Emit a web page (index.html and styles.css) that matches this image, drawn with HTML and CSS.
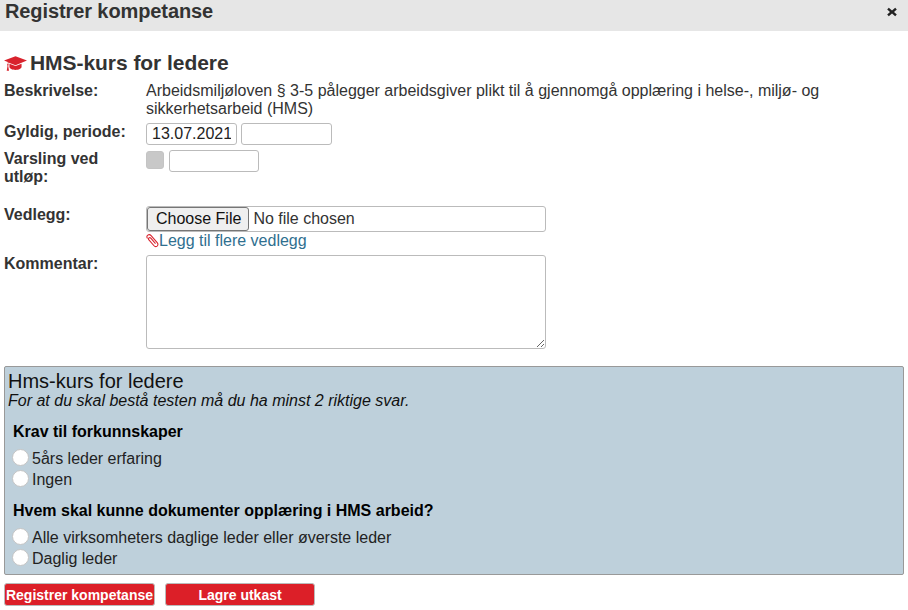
FILE: index.html
```html
<!DOCTYPE html>
<html lang="en">
<head>
    <meta charset="UTF-8">
    <title>Registrer kompetanse</title>
    <link rel="stylesheet" href="styles.css">
</head>
<body>
    <div class="dialog-header">
        <span class="dialog-title">Registrer kompetanse</span>
        <svg class="close-icon" viewBox="0 0 10 10" width="10" height="10"><path d="M1.800 .8 5 3.600 8.200 .8 9.800 2.400 7 5 9.800 7.600 8.200 9.200 5 6.400 1.800 9.200 .2 7.600 3 5 .2 2.400z"/></svg>
    </div>
    <div class="dialog-body">
        <h2 class="course-title">
            <svg class="cap-icon" viewBox="0 1 22 14" width="23" height="15"><path d="M11 1 0 5.200 3.600 6.600V8.200C3.200 8.400 3 8.800 3 9.200 3 9.600 3.200 9.900 3.400 10.100L2.600 15H4.800L4 10.100C4.300 9.900 4.400 9.600 4.400 9.200 4.400 8.800 4.300 8.500 4.100 8.300V7L11 9.600 22 5.200ZM5.200 8.200V11.400C5.200 12.900 8 14.200 11 14.200 14 14.200 16.800 12.900 16.800 11.400V8.200L11 10.500Z"/></svg>
            HMS-kurs for ledere
        </h2>
        <div class="form-row row-desc">
            <label>Beskrivelse:</label>
            <div class="desc">Arbeidsmiljøloven § 3-5 pålegger arbeidsgiver plikt til å gjennomgå opplæring i helse-, miljø- og sikkerhetsarbeid (HMS)</div>
        </div>
        <div class="form-row row-period">
            <label>Gyldig, periode:</label>
            <div class="inline">
                <input class="text-input date" type="text" value="13.07.2021">
                <input class="text-input date" type="text">
            </div>
        </div>
        <div class="form-row row-notify">
            <label>Varsling ved<br>utløp:</label>
            <div class="inline">
                <span class="check"></span>
                <input class="text-input notify" type="text">
            </div>
        </div>
        <div class="form-row row-attach">
            <label>Vedlegg:</label>
            <div>
                <div class="file-box"><span class="file-btn">Choose File</span><span class="file-name">No file chosen</span></div>
                <a class="add-link" href="#">
                    <svg class="clip-icon" viewBox="0 0 13 14" width="13" height="14"><path d="M1.500 4.500C.5 3.200 .8 1.800 1.800 1.100 2.900 .3 4.200 .6 5.100 1.600L11.200 8.600C12.300 9.900 12.100 11.300 11.100 12.100 10 12.900 8.700 12.600 7.800 11.500L2.900 5.900C2.300 5.200 2.400 4.400 3 3.900 3.600 3.500 4.300 3.600 4.800 4.200L9.500 9.600" fill="none" stroke-width="1.100"/></svg>Legg til flere vedlegg
                </a>
            </div>
        </div>
        <div class="form-row">
            <label>Kommentar:</label>
            <textarea class="comment"></textarea>
        </div>
        <div class="quiz">
            <div class="quiz-title">Hms-kurs for ledere</div>
            <div class="quiz-note">For at du skal bestå testen må du ha minst 2 riktige svar.</div>
            <div class="question">Krav til forkunnskaper</div>
            <div class="answer"><span class="radio"></span>5års leder erfaring</div>
            <div class="answer"><span class="radio"></span>Ingen</div>
            <div class="question second">Hvem skal kunne dokumenter opplæring i HMS arbeid?</div>
            <div class="answer"><span class="radio"></span>Alle virksomheters daglige leder eller øverste leder</div>
            <div class="answer"><span class="radio"></span>Daglig leder</div>
        </div>
        <div class="buttons">
            <button class="red-btn">Registrer kompetanse</button>
            <button class="red-btn draft">Lagre utkast</button>
        </div>
    </div>
</body>
</html>
```

FILE: styles.css
```css
html, body {
    margin: 0;
    padding: 0;
}
body {
    font-family: "Liberation Sans", Arial, sans-serif;
    font-size: 16px;
    color: #333;
    background: #fff;
    overflow: hidden;
}
.dialog-header {
    height: 31px;
    background: #e6e6e6;
    padding: 0 11px 0 5px;
    display: flex;
    justify-content: space-between;
    align-items: flex-start;
}
.dialog-title {
    font-size: 20px;
    font-weight: bold;
    line-height: 23px;
    letter-spacing: -.1px;
}
.close-icon {
    margin-top: 7px;
    fill: #222;
}
.dialog-body {
    padding: 20px 4px 0 4px;
}
.course-title {
    margin: 0 0 7px;
    font-size: 21px;
    line-height: 24px;
    font-weight: bold;
    letter-spacing: -.05px;
    display: flex;
    align-items: center;
    gap: 3px;
}
.cap-icon {
    fill: #d9232d;
}
.form-row {
    display: grid;
    grid-template-columns: 142px 1fr;
}
.form-row label {
    font-weight: bold;
    line-height: 18px;
}
.desc {
    width: 700px;
    line-height: 18px;
}
.row-desc {
    margin-bottom: 5px;
}
.row-period {
    margin-bottom: 5px;
}
.row-notify {
    height: 56px;
}
.row-attach {
    margin-bottom: 5px;
}
.inline {
    display: flex;
    align-items: flex-start;
    gap: 4px;
}
.text-input {
    box-sizing: border-box;
    height: 22px;
    padding: 0 5px;
    border: 1px solid #bbb;
    border-radius: 3px;
    font-family: inherit;
    font-size: 16px;
    color: #222;
    background: #fff;
}
.date {
    width: 91px;
}
.notify {
    width: 90px;
}
.check {
    box-sizing: border-box;
    width: 18px;
    height: 18px;
    margin: 1px 1px 0 0;
    background: #c8c8c8;
    border: 1px solid #c4c4c4;
    border-radius: 3px;
}
.file-box {
    box-sizing: border-box;
    width: 400px;
    height: 26px;
    border: 1px solid #bbb;
    border-radius: 3px;
    display: flex;
    align-items: center;
}
.file-btn {
    box-sizing: border-box;
    height: 24px;
    line-height: 22px;
    padding: 0 7px 0 8px;
    margin-right: 4px;
    background: #efefef;
    border: 1px solid #767676;
    border-radius: 3px;
    color: #111;
}
.file-name {
    color: #333;
}
.add-link {
    display: flex;
    align-items: center;
    height: 18px;
    color: #2f6f8f;
    text-decoration: none;
}
.clip-icon {
    stroke: #d9232d;
}
.comment {
    box-sizing: border-box;
    width: 400px;
    height: 94px;
    margin: 0;
    border: 1px solid #bbb;
    border-radius: 3px;
    display: block;
}
.quiz {
    box-sizing: border-box;
    height: 209px;
    margin-top: 17px;
    padding: 4px 3px;
    background: #bed0db;
    border: 1px solid #999;
    border-radius: 2px;
    color: #111;
}
.quiz-title {
    font-size: 20px;
    line-height: 21px;
}
.quiz-note {
    font-style: italic;
    line-height: 18px;
}
.question {
    font-weight: bold;
    line-height: 20px;
    margin: 12px 0 6px 5px;
    color: #000;
}
.question.second {
    margin-top: 11px;
}
.answer {
    display: flex;
    align-items: center;
    height: 21px;
    color: #222;
}
.radio {
    box-sizing: border-box;
    width: 17px;
    height: 17px;
    margin: 0 3px 2px 4px;
    background: #fff;
    border: 1px solid #c4c4c4;
    border-radius: 50%;
}
.buttons {
    display: flex;
    gap: 10px;
    margin-top: 8px;
}
.red-btn {
    box-sizing: border-box;
    width: 151px;
    height: 23px;
    padding: 0;
    background: #dc1f28;
    border: 1px solid #bbb;
    border-radius: 3px;
    color: #fff;
    font-family: inherit;
    font-size: 14px;
    font-weight: bold;
}
.red-btn.draft {
    width: 150px;
}
```
